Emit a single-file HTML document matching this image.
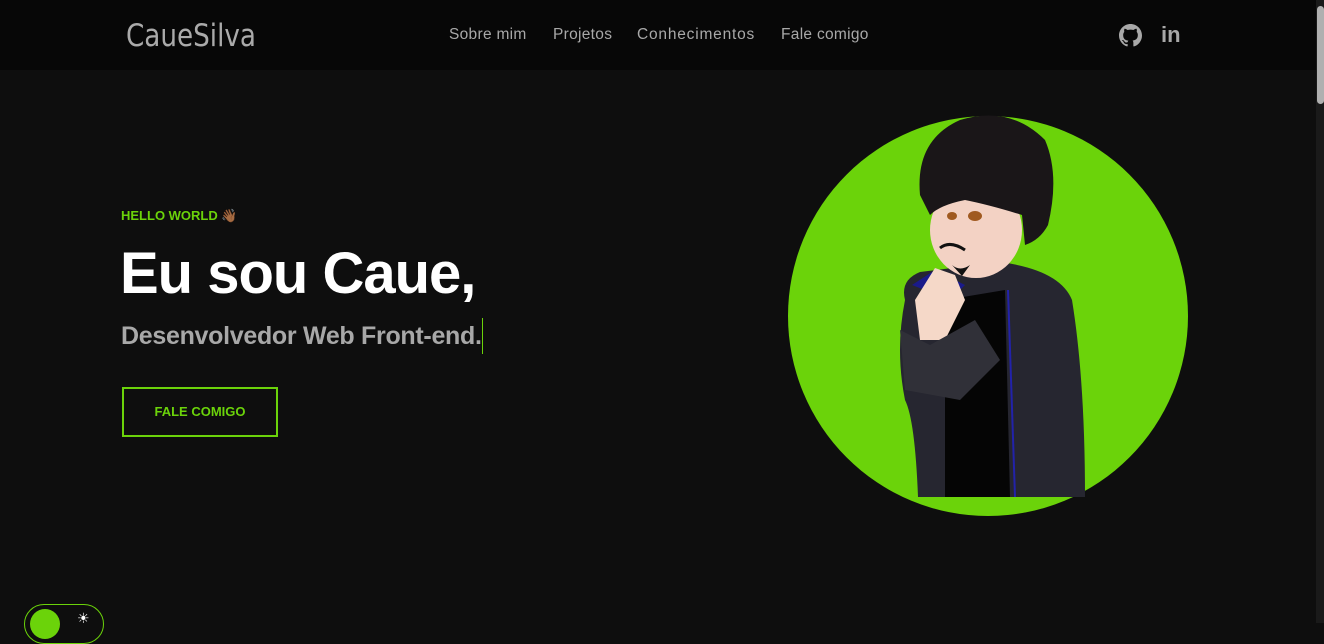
<!DOCTYPE html>
<html><head><meta charset="utf-8"><style>
*{margin:0;padding:0;box-sizing:border-box}
body{width:1324px;height:623px;overflow:hidden;background:#0e0e0e;font-family:"Liberation Sans",sans-serif;position:relative}
header{position:absolute;left:0;top:0;width:1316px;height:70px;background:#070707}
.logo{position:absolute;left:126px;top:18px;font-size:31px;color:#aaa;font-family:"DejaVu Sans Condensed","Liberation Sans Narrow",sans-serif;font-weight:200;transform:scaleX(0.94);transform-origin:left}
nav a{position:absolute;top:26px;font-size:15.5px;color:#a8a8a8;text-decoration:none;letter-spacing:0.3px}
.scroll{position:absolute;right:0;top:0;width:8px;height:623px;background:#1a1a1a}
.scroll div{position:absolute;left:1px;top:6px;width:7px;height:98px;background:#b0b0b0;border-radius:4px}
.hello{position:absolute;left:121px;top:208px;font-size:13px;font-weight:bold;color:#6bd30a}
h1{position:absolute;left:120px;top:240px;font-size:58px;font-weight:bold;color:#fff;letter-spacing:-1px}
.sub{position:absolute;left:121px;top:322px;font-size:25px;font-weight:bold;color:#a8a8a8;letter-spacing:-0.3px}
.cursor{position:absolute;left:482px;top:318px;width:1px;height:36px;background:#6bd30a}
.btn{position:absolute;left:122px;top:387px;width:156px;height:50px;border:2px solid #6bd30a;color:#6bd30a;font-size:13px;font-weight:bold;text-align:center;line-height:46px}
.tog{position:absolute;left:24px;top:604px;width:80px;height:40px;border:1.5px solid #6bd30a;border-radius:20px}
.tog .k{position:absolute;left:5px;top:4px;width:30px;height:30px;border-radius:50%;background:#6bd30a}
</style></head><body>
<header>
<div class="logo">CaueSilva</div>
<nav><a style="left:449px">Sobre mim</a><a style="left:553px">Projetos</a><a style="left:637px;letter-spacing:0.8px">Conhecimentos</a><a style="left:781px">Fale comigo</a></nav>
<svg style="position:absolute;left:1119px;top:24px" width="23" height="23" viewBox="0 0 16 16"><path fill="#a8a8a8" d="M8 0C3.58 0 0 3.580 0 8c0 3.54 2.29 6.53 5.470 7.59.4.07.55-.17.55-.38v-1.33c-2.23.48-2.7-1.070-2.7-1.07-.36-.92-.89-1.17-.89-1.17-.73-.5.05-.49.05-.49.8.06 1.23.83 1.23.83.71 1.22 1.87.87 2.33.66.07-.52.28-.87.51-1.07-1.78-.2-3.65-.89-3.65-3.95 0-.87.31-1.59.82-2.15-.08-.2-.36-1.02.08-2.12 0 0 .67-.21 2.2.82A7.6 7.6 0 0 1 8 3.87c.68 0 1.36.09 2 .27 1.53-1.04 2.2-.82 2.2-.82.44 1.1.16 1.92.08 2.12.51.56.82 1.27.82 2.15 0 3.07-1.87 3.75-3.65 3.95.29.25.54.73.54 1.48v2.2c0 .21.15.46.55.38A8 8 0 0 0 16 8c0-4.42-3.58-8-8-8z"/></svg>
<div style="position:absolute;left:1161px;top:22px;font-size:22px;font-weight:bold;color:#a8a8a8">in</div>
</header>
<div class="scroll"><div></div></div>
<div class="hello">HELLO WORLD 👋🏾</div>
<h1>Eu sou Caue,</h1>
<div class="sub">Desenvolvedor Web Front-end.</div>
<div class="cursor"></div>
<div class="btn">FALE COMIGO</div>
<svg style="position:absolute;left:0;top:0" width="1316" height="623">
<circle cx="988" cy="316" r="200" fill="#6bd30a"/>
<path d="M905 300 Q900 280 920 272 L1000 262 Q1060 270 1072 300 Q1085 380 1085 497 L918 497 Q915 420 905 400 Q895 350 905 300Z" fill="#262630"/>
<path d="M945 300 L1005 290 L1010 497 L945 497Z" fill="#050505"/>
<path d="M1008 290 L1015 497" stroke="#2222aa" stroke-width="2"/>
<ellipse cx="976" cy="230" rx="46" ry="48" fill="#f3d2c4"/>
<path d="M920 195 Q915 140 960 120 Q1010 105 1045 140 Q1060 175 1048 225 Q1040 240 1025 245 L1022 215 Q990 205 965 200 Q940 205 930 215Z" fill="#1a1618"/>
<ellipse cx="952" cy="216" rx="5" ry="4" fill="#a05a20"/><ellipse cx="975" cy="216" rx="7" ry="5" fill="#a05a20"/>
<path d="M940 248 Q950 240 965 250" stroke="#111" stroke-width="3" fill="none"/>
<path d="M952 265 Q960 272 970 265 L962 276Z" fill="#111"/>
<path d="M912 285 L935 270 L965 285 L950 300Z" fill="#1a1a8a"/>
<path d="M915 300 L935 268 L955 275 L965 300 L945 340 L920 340Z" fill="#f5d8c8"/>
<path d="M900 330 L930 345 L975 320 L1000 360 L960 400 L905 390Z" fill="#303038"/>
</svg>
<div class="tog"><div class="k"></div><div style="position:absolute;left:52px;top:5px;color:#fff;font-size:14px">☀</div></div>
</body></html>
